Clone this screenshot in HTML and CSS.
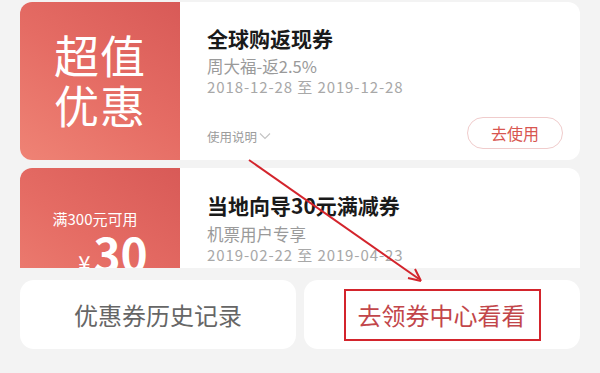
FILE: index.html
```html
<!DOCTYPE html>
<html lang="zh-CN">
<head>
<meta charset="utf-8">
<title>优惠券</title>
<link rel="stylesheet" href="styles.css">
</head>
<body>
<div class="page">
  <div class="list">
    <div class="card">
      <div class="card-left">
        <div class="promo">超值<br>优惠</div>
      </div>
      <div class="card-body">
        <div class="title">全球购返现券</div>
        <div class="sub">周大福-返2.5%</div>
        <div class="date">2018-12-28 至 2019-12-28</div>
        <div class="card-foot">
          <span class="rule">使用说明<svg class="chev" width="12" height="8" viewBox="0 0 12 8"><path d="M1 1.5 L6 6.5 L11 1.5" fill="none" stroke="#c4c4c4" stroke-width="1.2"/></svg></span>
          <span class="use-btn">去使用</span>
        </div>
      </div>
    </div>
    <div class="card card-second">
      <div class="card-left">
        <div class="cond">满300元可用</div>
        <div class="amount"><span class="yen">¥</span><span class="num">30</span></div>
      </div>
      <div class="card-body body-second">
        <div class="title">当地向导30元满减券</div>
        <div class="sub">机票用户专享</div>
        <div class="date">2019-02-22 至 2019-04-23</div>
      </div>
    </div>
  </div>
  <div class="bar">
    <div class="bar-btn history">优惠券历史记录</div>
    <div class="bar-btn center"><span class="mark">去领券中心看看</span></div>
  </div>
  <svg class="arrow" width="600" height="373" viewBox="0 0 600 373">
    <line x1="249" y1="160" x2="419" y2="279" stroke="#d3242c" stroke-width="2"/>
    <path d="M421 281 L408 278 M421 281 L415 269" stroke="#d3242c" stroke-width="2" fill="none"/>
  </svg>
</div>
</body>
</html>
```
FILE: styles.css
```css
* { box-sizing: border-box; }
html, body { margin: 0; padding: 0; }
body {
  background: #f3f3f3;
  font-family: "Noto Sans CJK SC", "Noto Sans", sans-serif;
  width: 600px;
  height: 373px;
  overflow: hidden;
}
.page {
  position: relative;
  width: 600px;
  height: 373px;
}
.list {
  height: 268px;
  overflow: hidden;
  padding: 2px 20px 0 20px;
  display: flex;
  flex-direction: column;
  gap: 8px;
}
.card {
  display: flex;
  background: #fff;
  border-radius: 12px;
  height: 158px;
  flex-shrink: 0;
}
.card-left {
  width: 160px;
  flex-shrink: 0;
  border-radius: 12px 0 0 12px;
  background: linear-gradient(35deg, #ef8375 0%, #e56c64 50%, #d85a57 100%);
  color: #fff;
  display: flex;
  flex-direction: column;
  align-items: center;
  justify-content: center;
}
.promo {
  font-size: 45px;
  line-height: 50px;
  text-align: center;
  letter-spacing: 1px;
  margin-top: -2px;
}
.card-body {
  flex: 1;
  display: flex;
  flex-direction: column;
  padding: 23px 17px 11px 27px;
}
.title {
  font-size: 21px;
  font-weight: 700;
  line-height: 26px;
  color: #1a1a1a;
}
.sub {
  margin-top: 4px;
  font-size: 16.5px;
  line-height: 22px;
  color: #9a9a9a;
}
.date {
  font-size: 15px;
  line-height: 20px;
  color: #a8a8a8;
  letter-spacing: 0.9px;
}
.card-foot {
  margin-top: auto;
  display: flex;
  align-items: center;
  justify-content: space-between;
}
.rule {
  font-size: 12.5px;
  color: #9c9c9c;
  display: flex;
  align-items: center;
  gap: 2px;
  margin-top: 6px;
}
.use-btn {
  width: 96px;
  height: 32px;
  border: 1px solid #f0cccc;
  border-radius: 16px;
  color: #d85650;
  font-size: 16px;
  display: flex;
  align-items: center;
  justify-content: center;
}
.card-second .card-left {
  justify-content: flex-start;
  padding-top: 41px;
}
.body-second {
  padding-top: 24px;
}
.body-second .sub { margin-top: 5px; }
.cond {
  font-size: 15px;
  line-height: 20px;
  margin-left: -10px;
}
.amount {
  margin-top: 0;
  margin-left: 26px;
  line-height: 1;
  display: flex;
  align-items: baseline;
}
.yen {
  font-size: 22px;
  margin-right: 3px;
}
.num {
  font-size: 46px;
  font-weight: 700;
}
.bar {
  display: flex;
  gap: 8px;
  padding: 12px 20px 0 20px;
}
.bar-btn {
  flex: 1;
  height: 69px;
  background: #fff;
  border-radius: 14px;
  display: flex;
  align-items: center;
  justify-content: center;
  font-size: 24px;
}
.history { color: #666; }
.center { color: #c2464a; }
.mark {
  border: 2.5px solid #d3242c;
  padding: 8px 13px 8px 12px;
  line-height: 32px;
  margin-left: 0;
}
.arrow {
  position: absolute;
  left: 0;
  top: 0;
  pointer-events: none;
}
```
